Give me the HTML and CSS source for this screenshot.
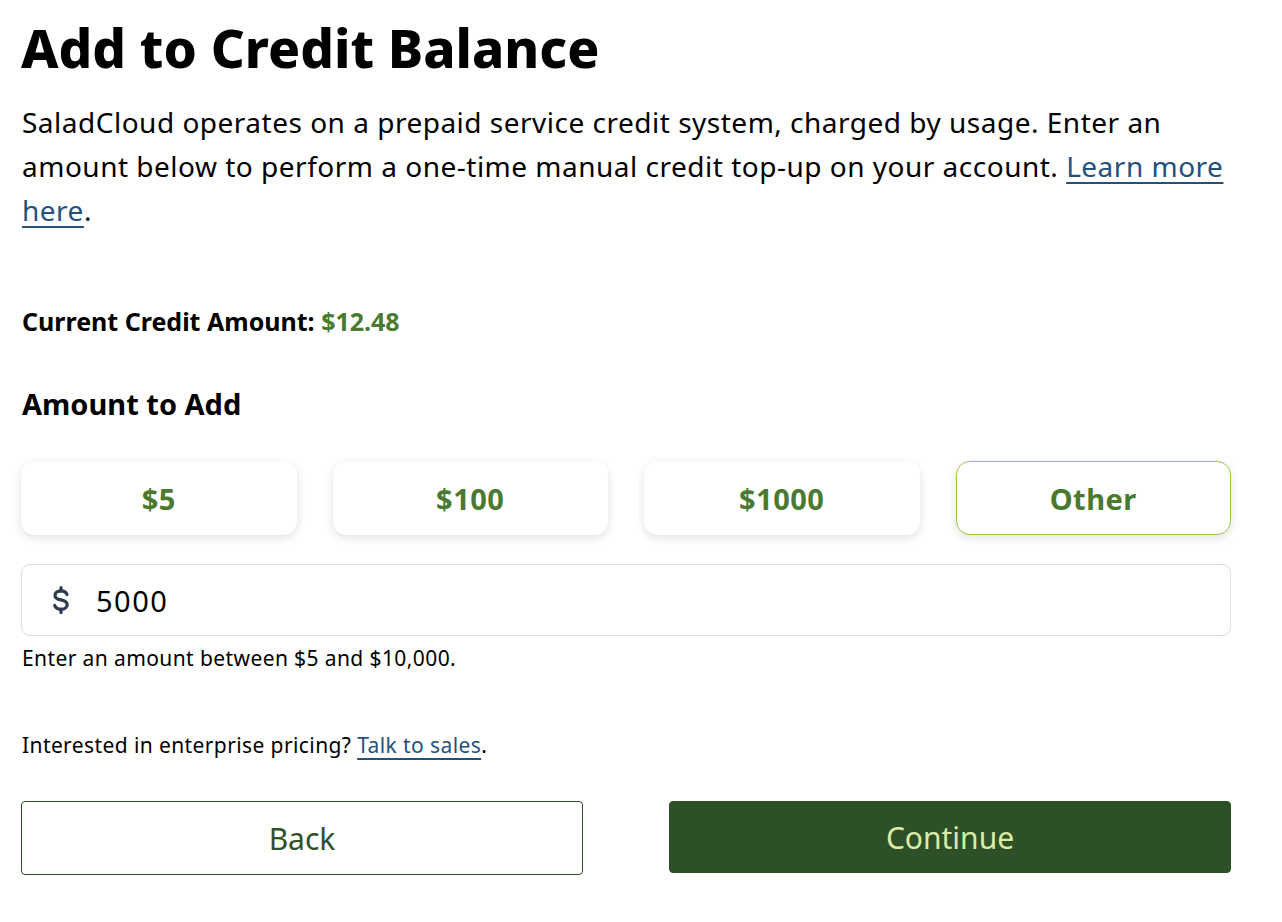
FILE: index.html
```html
<!DOCTYPE html>
<html lang="en">
<head>
<meta charset="utf-8">
<title>Add to Credit Balance</title>
<link rel="stylesheet" href="styles.css">
</head>
<body>
<main class="page">
  <h1 class="title">Add to Credit Balance</h1>
  <p class="intro">SaladCloud operates on a prepaid service credit system, charged by usage. Enter an amount below to perform a one-time manual credit top-up on your account. <a href="#" class="link">Learn more here</a>.</p>

  <p class="current">Current Credit Amount: <span class="green">$12.48</span></p>

  <h2 class="subtitle">Amount to Add</h2>

  <div class="options">
    <button class="option">$5</button>
    <button class="option">$100</button>
    <button class="option">$1000</button>
    <button class="option selected">Other</button>
  </div>

  <div class="input">
    <svg class="dollar" width="20" height="30" viewBox="0 0 20 30" fill="none" stroke="#2d3b4e" stroke-width="3.2" stroke-linecap="round" stroke-linejoin="round">
      <path d="M16 9.5c-.8-2.3-3.2-3.6-6-3.6-3.6 0-6 1.8-6 4.5 0 2.8 2.6 3.8 6 4.5 3.6.8 6.2 1.9 6.2 4.8 0 2.8-2.6 4.6-6.2 4.6-3 0-5.4-1.3-6.3-3.8"/>
      <path d="M10 2.5v3.4M10 24.2v3.4"/>
    </svg>
    <span class="value">5000</span>
  </div>
  <p class="helper">Enter an amount between $5 and $10,000.</p>

  <p class="enterprise">Interested in enterprise pricing? <a href="#" class="link">Talk to sales</a>.</p>

  <div class="actions">
    <button class="btn back">Back</button>
    <button class="btn continue">Continue</button>
  </div>
</main>
</body>
</html>
```
FILE: styles.css
```css
* { box-sizing: border-box; }
body {
  margin: 0;
  background: #fff;
  font-family: "Noto Sans", "Open Sans", sans-serif;
  color: #000;
}
.page {
  width: 1210px;
  margin-left: 21px;
  padding-top: 16px;
}
.title {
  margin: 0;
  font-size: 53px;
  font-weight: 800;
  line-height: 64px;
}
.intro {
  margin: 20px 0 0 1px;
  font-size: 28px;
  letter-spacing: 0.5px;
  line-height: 44px;
}
.link {
  color: #24507e;
  text-decoration: underline;
  text-underline-offset: 5px;
  text-decoration-thickness: 2px;
}
.current {
  margin: 73px 0 0 1px;
  font-size: 25px;
  font-weight: 700;
  line-height: 32px;
}
.green { color: #4a7a2f; }
.subtitle {
  margin: 49px 0 0 1px;
  font-size: 29px;
  font-weight: 700;
  line-height: 36px;
}
.options {
  margin-top: 39px;
  display: grid;
  grid-template-columns: repeat(4, 1fr);
  gap: 36px;
}
.option {
  height: 74px;
  border: 1px solid transparent;
  border-radius: 14px;
  background: #fff;
  box-shadow: 0 3px 10px rgba(0,0,0,0.12);
  font-family: inherit;
  font-size: 29px;
  font-weight: 700;
  color: #4a7a2f;
  letter-spacing: 0.5px;
}
.option.selected { border-color: #9cc64a; }
.input {
  margin-top: 29px;
  height: 72px;
  border: 1px solid #dcdfe3;
  border-radius: 9px;
  display: flex;
  align-items: center;
  padding-left: 29px;
  gap: 25px;
}
.dollar { display: block; }
.value { font-size: 29px; letter-spacing: 1.5px; }
.helper {
  margin: 9px 0 0 1px;
  font-size: 21px;
  letter-spacing: 0.4px;
  line-height: 26px;
}
.enterprise {
  margin: 61px 0 0 1px;
  font-size: 21px;
  letter-spacing: 0.4px;
  line-height: 26px;
}
.actions {
  margin-top: 43px;
  display: grid;
  grid-template-columns: 1fr 1fr;
  gap: 86px;
}
.btn {
  height: 74px;
  border-radius: 4px;
  font-family: inherit;
  font-size: 30px;
  font-weight: 400;
}
.back {
  background: #fff;
  border: 1px solid #2d5028;
  color: #2d5028;
}
.continue {
  background: #2e5028;
  border: 1px solid #2e5028;
  color: #dbeba6;
  height: 72px;
}
```
